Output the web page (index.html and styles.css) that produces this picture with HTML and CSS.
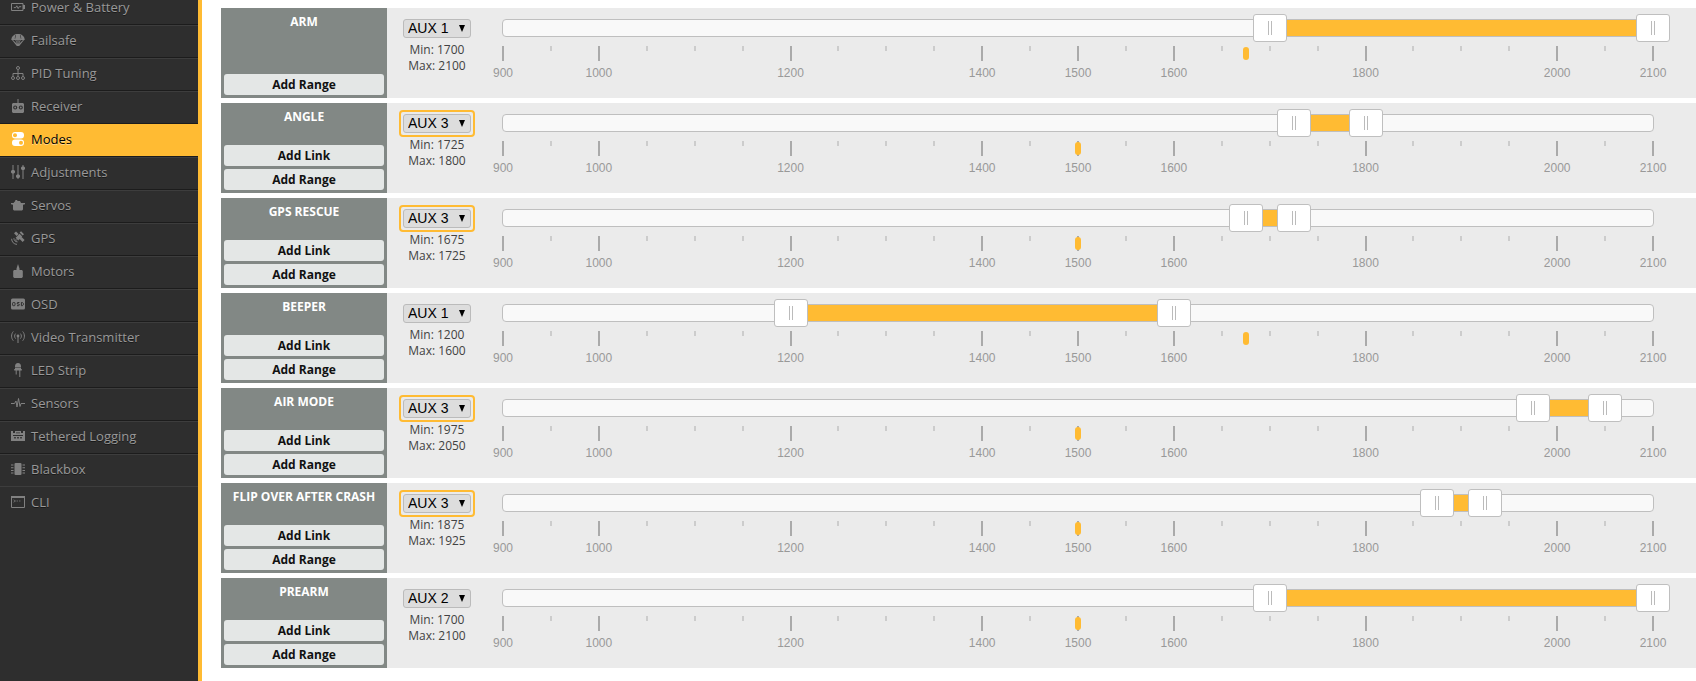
FILE: index.html
```html
<!DOCTYPE html>
<html lang="en">
<head>
<meta charset="utf-8">
<title>Modes</title>
<link rel="stylesheet" href="styles.css">
</head>
<body>
<div class="app">
  <nav class="sidebar">
    <ul class="tabs">
      <li class="tab"><a href="#power"><svg class="icon" viewBox="0 0 14 14"><path class="line" d="M.5 3.500h11.500v7H.5z"/><path d="M12 5h2v4h-2z"/><path class="line" d="M2.800 7.600h2l1-1.800 1.400 2.800 1-1.900h2"/></svg>Power &amp; Battery</a></li>
      <li class="tab"><a href="#failsafe"><svg class="icon" viewBox="0 0 14 14"><path d="M.4 6.300C.7 3 3.500 1 7 1s6.300 2 6.600 5.300L8.200 13H5.800z"/><path class="cut" d="M2 6.900h2.300l1.700 4zM5.300 6.900h1.200v4.500zM7.500 6.900h1.200l-1.200 4.500zM9.700 6.900H12l-4 4zM4.300 2.200 3.700 5.800h.5L5 2zM9.700 2.200l.6 3.600h-.5L9 2z"/></svg>Failsafe</a></li>
      <li class="tab"><a href="#pid"><svg class="icon" viewBox="0 0 14 14"><path class="line" d="M7 4v6M2 10V7.500h10V10"/><circle class="line" cx="7" cy="2" r="1.500"/><circle class="line" cx="2" cy="12" r="1.500"/><circle class="line" cx="7" cy="12" r="1.500"/><circle class="line" cx="12" cy="12" r="1.500"/></svg>PID Tuning</a></li>
      <li class="tab"><a href="#receiver"><svg class="icon" viewBox="0 0 14 14"><path d="M6.500 0h1v4H12l1 1v8l-1 1H2l-1-1V5l1-1h4.500z"/><circle class="cut" cx="4.200" cy="8.500" r="2"/><circle class="cut" cx="9.800" cy="8.500" r="2"/><circle cx="4.200" cy="8.500" r=".9"/><circle cx="9.800" cy="8.500" r=".9"/></svg>Receiver</a></li>
      <li class="tab active"><a href="#modes" aria-current="page"><svg class="icon" viewBox="0 0 14 14"><rect x="1" y="0" width="12" height="6.400" rx="3"/><rect x="1" y="7.600" width="12" height="6.400" rx="3"/><circle class="cut" cx="4" cy="3.200" r="2"/><circle class="cut" cx="10" cy="10.800" r="2"/></svg>Modes</a></li>
      <li class="tab"><a href="#adjustments"><svg class="icon" viewBox="0 0 14 14"><path d="M1.500 0h1v14h-1zM6.500 0h1v14h-1zM11.500 0h1v14h-1z"/><path d="M1 5h2l1 1v1.500l-1 1H1l-1-1V6zM6 9.500h2l1 1V12l-1 1H6l-1-1v-1.500zM11 1.500h2l1 1V4l-1 1h-2l-1-1V2.500z"/></svg>Adjustments</a></li>
      <li class="tab"><a href="#servos"><svg class="icon" viewBox="0 0 14 14"><path d="M4.300 2h2v1h2.700l1 2h4v1.200l-2 .6v4.700l-1 1H3l-1-1V6.800L0 6.200V5h2.500l1.800-2z"/></svg>Servos</a></li>
      <li class="tab"><a href="#gps"><svg class="icon" viewBox="0 0 14 14"><path d="m3 2.300 2-1.900 2.600 2.600-2 1.900zM8.400 7.700l2-1.900 3.200 3.200-2 1.900zM4.600 6.800l4-4 2.600 2.600-4 4zM8.600 1.600l1.500-1.300L13 3.200l-1.400 1.300z"/><path class="line" d="M2.900 7.200c.1 2.200 1.300 3.500 3.700 3.700M.6 7.800c.2 3.300 2.200 5.400 5.400 5.600"/><circle cx="5" cy="9" r=".8"/></svg>GPS</a></li>
      <li class="tab"><a href="#motors"><svg class="icon" viewBox="0 0 14 14"><path d="M7 0 8.500 4.500V6H11l.8 1v6l-1 1H3.200l-1-1V7L3 6h2.500V4.500z"/></svg>Motors</a></li>
      <li class="tab"><a href="#osd"><svg class="icon" viewBox="0 0 14 14"><rect x="0" y="1.500" width="14" height="11" rx="1.500"/><rect class="cutline" x="1.600" y="5.500" width="2.400" height="3.200" rx=".8"/><path class="cutline" d="M8.400 5.500H6.700L6 6l.5 1h1.300l.6.700-.6 1H6M10.400 5.500h1l1 1v1.200l-1 1h-1z"/></svg>OSD</a></li>
      <li class="tab"><a href="#vtx"><svg class="icon" viewBox="0 0 14 14"><circle cx="7" cy="6" r="1.400"/><path d="M6.500 6h1v7h-1z"/><path class="line" d="M4.600 3.600c-1.300 1.400-1.300 3.600 0 5M9.400 3.600c1.300 1.400 1.300 3.600 0 5M2.300 1.500c-2.300 2.600-2.300 6.600 0 9.200M11.700 1.500c2.300 2.600 2.300 6.600 0 9.200"/></svg>Video Transmitter</a></li>
      <li class="tab"><a href="#led"><svg class="icon" viewBox="0 0 14 14"><path d="M4 3.500a3 3.500 0 0 1 6 0V4H4zM4 4.500h6V6h.8v1.500H3.200V6H4z"/><path d="M4.700 7h1v4.500h-1zM8.300 7h1v7h-1z"/></svg>LED Strip</a></li>
      <li class="tab"><a href="#sensors"><svg class="icon" viewBox="0 0 14 14"><path class="line" d="M0 7.500h3.500L5 5l1 6 1.500-8.500L9 10.500l1-3h4"/></svg>Sensors</a></li>
      <li class="tab"><a href="#logging"><svg class="icon" viewBox="0 0 14 14"><path d="M0 2h2v2h2V2h6v2h2V2h2v10H0z"/><path class="cut" d="M2 6h10v1H2zM3.200 8h1.600v1.600H3.200zM6.200 8h1.600v1.600H6.200zM9.200 8h1.600v1.600H9.200zM5 3.400h4v.8H5z"/></svg>Tethered Logging</a></li>
      <li class="tab"><a href="#blackbox"><svg class="icon" viewBox="0 0 14 14"><rect x="3.500" y="1" width="7" height="12" rx="1"/><path d="M0 2.500h2.500v1H0zM0 5.200h2.500v1H0zM0 7.900h2.500v1H0zM0 10.600h2.500v1H0zM11.500 2.500H14v1h-2.500zM11.500 5.200H14v1h-2.500zM11.500 7.900H14v1h-2.500zM11.500 10.600H14v1h-2.500z"/></svg>Blackbox</a></li>
      <li class="tab"><a href="#cli"><svg class="icon" viewBox="0 0 14 14"><path class="line" d="M.5 2h13v10.500H.5z"/><path d="M0 1h14v2H0z"/><path class="line thin" d="m2.500 4.800 2 1.200-2 1.200M5.500 6H7M8 6h1.500"/></svg>CLI</a></li>
    </ul>
  </nav>
  <main class="modes" id="modes"></main>
</div>
<script src="script.js"></script>
</body>
</html>
```
FILE: styles.css
```css
* {
  box-sizing: border-box;
}

body {
  margin: 0;
  background: #fff;
  color: #424242;
  font-family: "Open Sans", "Noto Sans", sans-serif;
  font-size: 12px;
}

.app {
  display: flex;
  height: 100vh;
  overflow: hidden;
}

/* Sidebar */
.sidebar {
  flex: none;
  width: 202px;
  overflow: hidden;
  background: #2e2e2e;
  border-right: 4px solid #ffbb33;
}

.tabs {
  margin: -8px 0 0;
  padding: 0;
  list-style: none;
}

.tab a {
  --ground: #2e2e2e;
  display: flex;
  align-items: center;
  gap: 6px;
  height: 33px;
  padding: 0 11px 3px;
  border-top: 1px solid #3d3d3d;
  border-bottom: 1px solid #1c1c1c;
  color: #999;
  font-size: 13px;
  line-height: 20px;
  text-decoration: none;
  text-shadow: 0 1px rgba(0, 0, 0, 0.45);
}

.tab:nth-last-child(2) a {
  height: 32px;
  border-bottom: 0;
}

.tab:last-child a {
  border-bottom: 0;
}

.tab.active a {
  --ground: #ffbb33;
  border-top-color: #ffbb33;
  background: #ffbb33;
  color: #000;
  text-shadow: 0 1px rgba(255, 255, 255, 0.45);
}

.icon {
  flex: none;
  width: 14px;
  height: 14px;
  fill: #818181;
}

.active .icon {
  fill: #fff;
}

.icon .line {
  fill: none;
  stroke: #818181;
}

.icon .thin {
  stroke-width: 0.7;
}

.icon .cut {
  fill: var(--ground);
}

.icon .cutline {
  fill: none;
  stroke: var(--ground);
}

/* Mode rows */
.modes {
  flex: 1;
  display: flex;
  flex-direction: column;
  gap: 5px;
  min-width: 0;
  padding: 8px 0 0 19px;
}

.mode {
  display: flex;
  min-height: 90px;
  background: #ebebeb;
}

.info {
  flex: none;
  display: flex;
  flex-direction: column;
  gap: 3px;
  width: 166px;
  padding: 3px;
  background: #828885;
}

.name {
  flex: 1;
  margin: 0;
  padding-top: 2px;
  color: #fff;
  font-size: 12px;
  font-weight: 700;
  line-height: 18px;
  text-align: center;
}

.add {
  height: 21px;
  padding: 0;
  border: 0;
  border-radius: 3px;
  background: #e4e7e6;
  color: #111;
  font: 700 12px/20px "Open Sans", "Noto Sans", sans-serif;
}

.channel {
  flex: none;
  display: flex;
  flex-direction: column;
  align-items: center;
  width: 100px;
  padding-top: 7px;
  line-height: 16px;
}

.picker {
  position: relative;
  padding: 2px;
  border: 2px solid transparent;
  border-radius: 4px;
}

.picker.auto {
  border-color: #ffbb33;
}

.picker select {
  display: block;
  width: 68px;
  height: 19px;
  padding: 0 4px;
  appearance: none;
  border: 1px solid #bbb;
  border-radius: 3px;
  background: #ddd;
  color: #000;
  font: 14px/17px "Liberation Sans", Arial, sans-serif;
}

.picker::after {
  content: "";
  position: absolute;
  top: 8px;
  right: 8px;
  width: 6px;
  height: 7px;
  background: #000;
  clip-path: polygon(0 0, 100% 0, 50% 100%);
  pointer-events: none;
}

.limits {
  margin: 0;
  text-align: center;
}

/* Range slider and its scale */
.range {
  flex: 1;
  min-width: 0;
  padding: 11px 42px 0 15px;
}

.slider {
  position: relative;
  height: 18px;
  border: 1px solid #bfbfbf;
  border-radius: 4px;
  background: #f9f9f9;
}

.fill {
  position: absolute;
  top: 0;
  bottom: 0;
  background: #ffbb33;
}

.slider input {
  position: absolute;
  top: -6px;
  left: -17px;
  width: calc(100% + 34px);
  height: 28px;
  margin: 0;
  appearance: none;
  background: none;
  pointer-events: none;
}

.slider input::-webkit-slider-thumb {
  appearance: none;
  width: 34px;
  height: 28px;
  border: 1px solid #bfbfbf;
  border-radius: 3px;
  background: linear-gradient(90deg, #bbb 1px, transparent 1px 3px, #bbb 3px) center / 4px 14px no-repeat #fff;
  pointer-events: auto;
}

.scale {
  position: relative;
  height: 36px;
  margin: 9px 1px 0;
  color: #999;
  font: 12px/14px "Liberation Sans", Arial, sans-serif;
}

.tick {
  position: absolute;
  top: 0;
  width: 2px;
  height: 5px;
  margin-left: -1px;
  background: #ccc;
}

.tick.major {
  height: 15px;
  background: #aaa;
}

.value {
  position: absolute;
  top: 20px;
  transform: translateX(-50%);
}

.marker {
  position: absolute;
  top: 1px;
  width: 6px;
  height: 13px;
  margin-left: -3px;
  border-radius: 3px;
  background: #ffbb33;
}
```
FILE: script.js
```js
const LOW = 900;
const HIGH = 2100;
const LABELS = [900, 1000, 1200, 1400, 1500, 1600, 1800, 2000, 2100];
const MODES = [
  { name: 'ARM', aux: 1, min: 1700, max: 2100, pulse: 1675, noLink: true },
  { name: 'ANGLE', aux: 3, min: 1725, max: 1800, pulse: 1500, auto: true },
  { name: 'GPS RESCUE', aux: 3, min: 1675, max: 1725, pulse: 1500, auto: true },
  { name: 'BEEPER', aux: 1, min: 1200, max: 1600, pulse: 1675 },
  { name: 'AIR MODE', aux: 3, min: 1975, max: 2050, pulse: 1500, auto: true },
  { name: 'FLIP OVER AFTER CRASH', aux: 3, min: 1875, max: 1925, pulse: 1500, auto: true },
  { name: 'PREARM', aux: 2, min: 1700, max: 2100, pulse: 1500 },
];

const percent = (v) => ((v - LOW) / (HIGH - LOW)) * 100 + '%';

function scale(pulse) {
  let out = '';
  for (let v = LOW; v <= HIGH; v += 50) {
    const major = LABELS.includes(v);
    out += `<span class="tick${major ? ' major' : ''}" style="left:${percent(v)}"></span>`;
    if (major) out += `<span class="value" style="left:${percent(v)}">${v}</span>`;
  }
  return out + `<span class="marker" style="left:${percent(pulse)}"></span>`;
}

function row(m) {
  const options = [1, 2, 3, 4]
    .map((n) => `<option${n === m.aux ? ' selected' : ''}>AUX ${n}</option>`)
    .join('');
  const input = (cls, v) =>
    `<input type="range" class="${cls}" min="${LOW}" max="${HIGH}" step="25" value="${v}" aria-label="${m.name} ${cls}">`;
  return `<section class="mode">
    <div class="info">
      <h2 class="name">${m.name}</h2>
      ${m.noLink ? '' : '<button type="button" class="add">Add Link</button>'}
      <button type="button" class="add">Add Range</button>
    </div>
    <div class="channel">
      <div class="picker${m.auto ? ' auto' : ''}"><select aria-label="${m.name} channel">${options}</select></div>
      <p class="limits">Min: <span class="low">${m.min}</span><br>Max: <span class="high">${m.max}</span></p>
    </div>
    <div class="range">
      <div class="slider"><div class="fill"></div>${input('minimum', m.min)}${input('maximum', m.max)}</div>
      <div class="scale">${scale(m.pulse)}</div>
    </div>
  </section>`;
}

const root = document.getElementById('modes');
root.innerHTML = MODES.map(row).join('');

root.querySelectorAll('.mode').forEach((el) => {
  const min = el.querySelector('.minimum');
  const max = el.querySelector('.maximum');
  const fill = el.querySelector('.fill');
  const update = () => {
    fill.style.left = percent(+min.value);
    fill.style.width = ((max.value - min.value) / (HIGH - LOW)) * 100 + '%';
    el.querySelector('.low').textContent = min.value;
    el.querySelector('.high').textContent = max.value;
  };
  min.addEventListener('input', update);
  max.addEventListener('input', update);
  update();
});
```
